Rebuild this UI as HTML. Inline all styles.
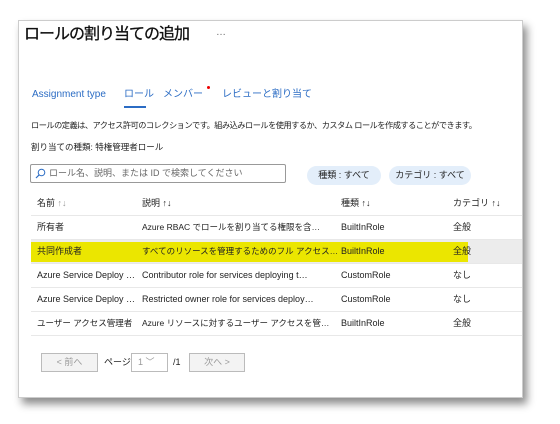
<!DOCTYPE html><html><head><meta charset="utf-8"><style>
*{margin:0;padding:0;box-sizing:border-box}
body{width:560px;height:424px;background:#fff;font-family:"Liberation Sans","Noto Sans CJK JP",sans-serif;position:relative;overflow:hidden;color:#222}
.panel{position:absolute;left:18px;top:20px;width:505px;height:378px;background:#fff;border:1px solid #ccc;box-shadow:4px 6px 8px rgba(0,0,0,.45);overflow:hidden}
.a{position:absolute;white-space:nowrap;line-height:1.2}
.t{font-size:9px}
.row{position:absolute;left:12px;width:493px;height:24px;border-bottom:1px solid #e8e8e8;font-size:9px}
.c{position:absolute;top:0;height:23px;line-height:23px;white-space:nowrap;overflow:hidden}
.btn{position:absolute;top:332px;height:19px;border:1px solid #bbb;background:#f3f3f3;color:#999;font-size:9px;text-align:center;line-height:17px}
</style></head><body>
<div class="panel">
<div class="a" style="left:5px;top:4px;font-size:16px;color:#111;letter-spacing:-1px;-webkit-text-stroke:0.3px #111">ロールの割り当ての追加</div>
<div class="a" style="left:197px;top:6px;font-size:10px;color:#666">…</div>
<div class="a" style="left:13px;top:68px;font-size:10px;color:#2b6cc4">Assignment type</div>
<div class="a" style="left:105px;top:68px;font-size:10px;color:#2b6cc4">ロール</div>
<div class="a" style="left:105px;top:85px;width:22px;height:2px;background:#2b6cc4"></div>
<div class="a" style="left:144px;top:68px;font-size:10px;color:#2b6cc4">メンバー</div>
<div class="a" style="left:188px;top:65px;width:3px;height:3px;border-radius:50%;background:#e00"></div>
<div class="a" style="left:203px;top:68px;font-size:10px;color:#2b6cc4">レビューと割り当て</div>
<div class="a" style="left:12px;top:100px;font-size:8.2px;letter-spacing:-0.5px">ロールの定義は、アクセス許可のコレクションです。組み込みロールを使用するか、カスタム ロールを作成することができます。</div>
<div class="a" style="left:12px;top:121px;font-size:8.5px">割り当ての種類: 特権管理者ロール</div>
<div class="a" style="left:11px;top:143px;width:256px;height:19px;border:1px solid #999;border-radius:2px;font-size:9px;color:#666;padding:3px 0 0 18px">ロール名、説明、または ID で検索してください
<svg style="position:absolute;left:4px;top:3px" width="11" height="11" viewBox="0 0 11 11"><circle cx="6.5" cy="4.5" r="3.3" fill="none" stroke="#2b6cc4" stroke-width="1"/><path d="M4.2 6.8L1 10" stroke="#2b6cc4" stroke-width="1.2"/></svg></div>
<div class="a" style="left:288px;top:145px;width:74px;height:19px;border-radius:10px;background:#e3eefa;font-size:9px;text-align:center;line-height:19px">種類 : すべて</div>
<div class="a" style="left:370px;top:145px;width:82px;height:19px;border-radius:10px;background:#e3eefa;font-size:9px;text-align:center;line-height:19px">カテゴリ : すべて</div>
<div class="row" style="top:171px"><div class="c" style="left:6px">名前 <span style="color:#999">↑↓</span></div><div class="c" style="left:111px">説明 ↑↓</div><div class="c" style="left:310px">種類 ↑↓</div><div class="c" style="left:422px">カテゴリ ↑↓</div></div>
<div class="row" style="top:195px"><div class="c" style="left:6px">所有者</div><div class="c" style="left:111px;width:196px;font-size:8.5px">Azure RBAC でロールを割り当てる権限を含…</div><div class="c" style="left:310px">BuiltInRole</div><div class="c" style="left:422px">全般</div></div>
<div class="row" style="top:219px;background:#ececec"><div style="position:absolute;left:0;top:2px;width:437px;height:20px;background:#ebe600"></div><div class="c" style="left:6px">共同作成者</div><div class="c" style="left:111px;width:196px;font-size:8.5px">すべてのリソースを管理するためのフル アクセス…</div><div class="c" style="left:310px">BuiltInRole</div><div class="c" style="left:422px">全般</div></div>
<div class="row" style="top:243px"><div class="c" style="left:6px;width:102px">Azure Service Deploy …</div><div class="c" style="left:111px;width:196px">Contributor role for services deploying t…</div><div class="c" style="left:310px">CustomRole</div><div class="c" style="left:422px">なし</div></div>
<div class="row" style="top:267px"><div class="c" style="left:6px;width:102px">Azure Service Deploy …</div><div class="c" style="left:111px;width:196px">Restricted owner role for services deploy…</div><div class="c" style="left:310px">CustomRole</div><div class="c" style="left:422px">なし</div></div>
<div class="row" style="top:291px"><div class="c" style="left:6px;width:102px;font-size:8.5px">ユーザー アクセス管理者</div><div class="c" style="left:111px;width:196px;font-size:8.5px">Azure リソースに対するユーザー アクセスを管…</div><div class="c" style="left:310px">BuiltInRole</div><div class="c" style="left:422px">全般</div></div>
<div class="btn" style="left:22px;width:57px">&lt; 前へ</div>
<div class="a t" style="left:85px;top:336px">ページ</div>
<div class="btn" style="left:112px;width:37px;background:#fff;text-align:left;padding-left:6px">1 ﹀</div>
<div class="a t" style="left:154px;top:336px">/1</div>
<div class="btn" style="left:170px;width:56px">次へ &gt;</div>
</div>
</body></html>
